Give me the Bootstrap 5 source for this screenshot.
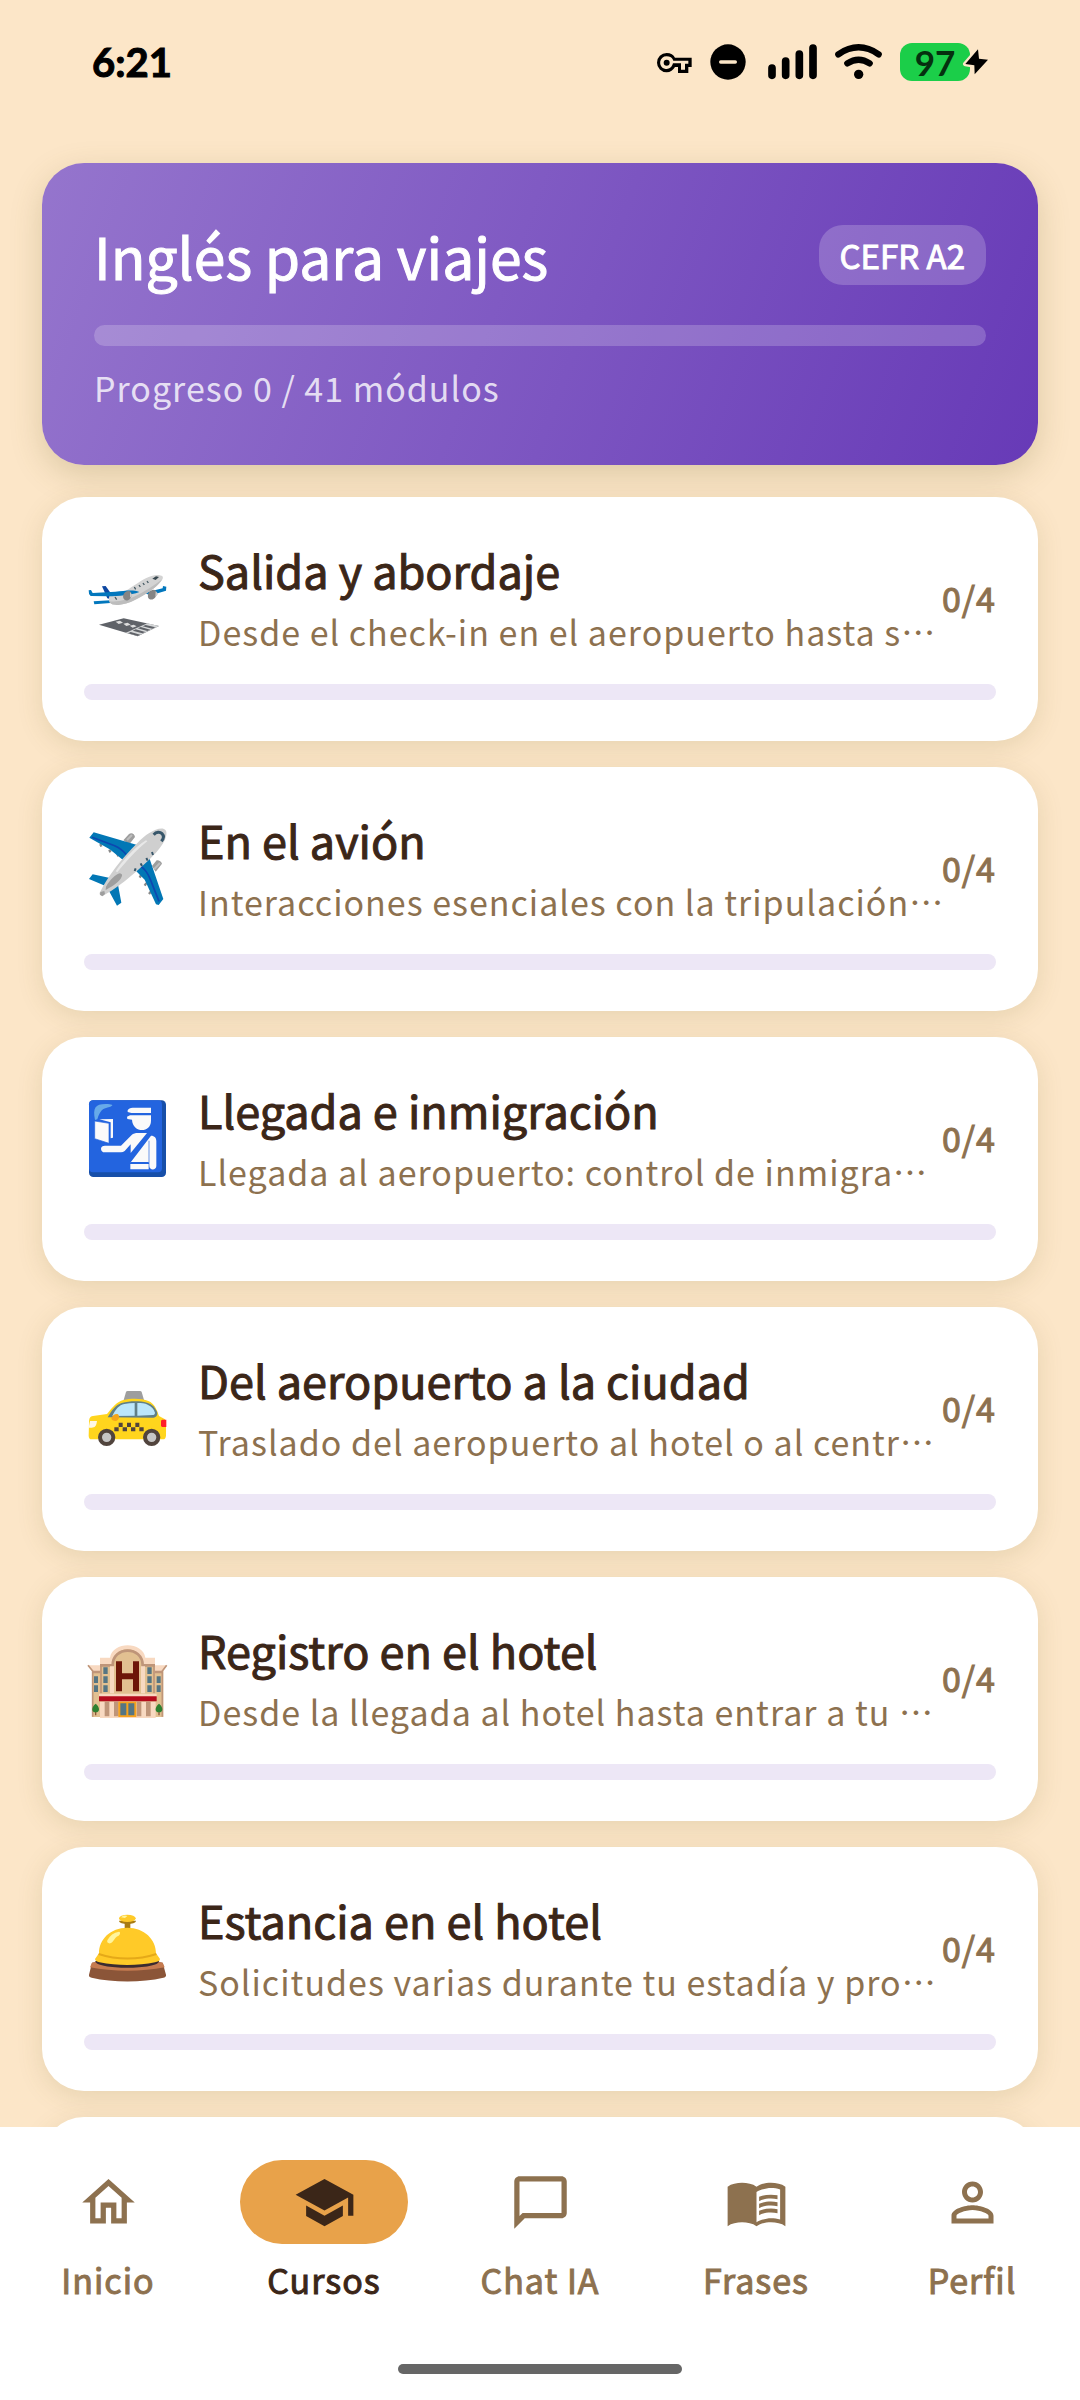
<!DOCTYPE html>
<html lang="es">
<head>
<meta charset="utf-8">
<meta name="viewport" content="width=device-width, initial-scale=1">
<title>Inglés para viajes</title>
<link rel="stylesheet" href="https://cdn.jsdelivr.net/npm/bootstrap@5.3.0/dist/css/bootstrap.min.css">
<style>
  :root { --sand: #fce6c8; --brown: #8d714f; --ink: #3b2618; }
  body { background: var(--sand); color: var(--brown); font-family: "Noto Sans CJK SC", "Noto Sans", sans-serif; font-size: 34px; line-height: 50px; }
  .status { padding: 43px 92px 82px; color: #000; font-family: Lato, "Open Sans", sans-serif; font-weight: 700; line-height: 38px; }
  .clock { font-size: 40px; -webkit-text-stroke: 1px; }
  .status-icons { gap: 18px; }
  .battery { width: 88px; height: 38px; }
  .battery-level { width: 70px; border-radius: 12px; background: #1bce49; color: #05300f; font-size: 35px; }
  .battery-bolt { left: 60px; top: 0; }
  .page { padding: 0 42px 26px; }
  .hero { padding: 52px; border-radius: 42px; margin-bottom: 32px; background: linear-gradient(110deg, #9575cd, #673ab7); box-shadow: 0 10px 32px rgba(110, 100, 40, .22); }
  .hero h1 { font-size: 57px; line-height: 80px; }
  .level { padding: 5px 21px; border-radius: 24px; background: rgba(255, 255, 255, .2); font-size: 33px; }
  .medium { font-weight: 400; -webkit-text-stroke: 1px; }
  .tracked, .hero p, .unit p { letter-spacing: 1px; }
  .hero .progress { height: 21px; margin: 30px 0 17px; border-radius: 11px; background: rgba(255, 255, 255, .2); }
  .hero p { color: rgba(255, 255, 255, .8); }
  .units { gap: 26px; }
  .unit { padding: 42px 42px 41px; min-height: 244px; border-radius: 42px; background: #fff; color: inherit; box-shadow: 0 6px 26px rgba(110, 100, 40, .15); }
  .unit h2 { font-size: 45px; line-height: 62px; margin-bottom: 6px; color: var(--ink); }
  .unit-text { min-width: 0; }
  .unit .progress { height: 16px; margin-top: 27px; border-radius: 8px; background: #ede7f6; }
  .emoji { width: 88px; height: 88px; margin-right: 26px; }
  .tabs { height: 273px; padding-top: 33px; background: #fff; }
  .tab { color: var(--brown); }
  .tab.active { color: var(--ink); }
  .pill { width: 168px; height: 84px; margin-bottom: 11px; }
  .tab.active .pill { background: #e8a24a; }
  .pill svg { width: 63px; height: 63px; fill: currentColor; }
  .home-bar { width: 284px; height: 10px; margin: 59px auto 0; background: #666; }
</style>
</head>
<body>
<header class="status d-flex justify-content-between align-items-center">
  <span class="clock">6:21</span>
  <div class="status-icons d-flex align-items-center">
    <svg width="35" height="38" viewBox="52 69 105 114"><path fill-rule="evenodd" d="M81 99c12 0 21 6 25 14h50v28h-10v18h-31v-18h-9c-5 9-14 16-25 16a29 29 0 0 1 0-58zm0 10a19 19 0 1 0 17 26l2-5h24v19h12v-18h10v-9H101l-2-4c-3-5-9-9-18-9zm0 10a9 9 0 1 1 0 18 9 9 0 0 1 0-18z"/></svg>
    <svg width="36" height="38" viewBox="210 69 108 114"><circle cx="264" cy="126" r="53"/><path d="M242 126h44" stroke="#fce6c8" stroke-width="10" stroke-linecap="round"/></svg>
    <svg width="53" height="38" viewBox="372 69 159 114"><path stroke="#000" stroke-width="23" stroke-linecap="round" d="M396 144v22M437 123v43M478 102v64M519 84v82"/></svg>
    <svg width="47" height="38" viewBox="585 69 141 114"><path fill="none" stroke="#000" stroke-width="19" stroke-linecap="round" d="M595 103q61-42 121 0M622 130q34-22 67 0"/><circle cx="656" cy="163" r="14"/></svg>
    <div class="battery position-relative d-flex">
      <span class="battery-level text-center">97</span>
      <svg class="battery-bolt position-absolute" width="28" height="38" viewBox="960 69 84 114"><path d="M1014 88l-38 44 27 4 1 27 40-44-27-3z" stroke="#fce6c8" stroke-width="14" stroke-linejoin="round"/><path d="M1014 88l-38 44 27 4 1 27 40-44-27-3z"/></svg>
    </div>
  </div>
</header>

<main class="page">
  <section class="hero text-white">
    <div class="d-flex justify-content-between align-items-center">
      <h1 class="medium mb-0">Inglés para viajes</h1>
      <span class="level medium">CEFR A2</span>
    </div>
    <div class="progress" role="progressbar" aria-label="Progreso del curso" aria-valuenow="0" aria-valuemin="0" aria-valuemax="41"><div class="progress-bar" style="width:0%"></div></div>
    <p class="mb-0">Progreso 0 / 41 módulos</p>
  </section>

  <div class="units d-flex flex-column">
    <a class="unit d-block text-decoration-none" href="#salida">
      <div class="d-flex align-items-center">
        <svg class="emoji flex-shrink-0" viewBox="42 39 264 264" aria-hidden="true">
          <path d="M87 251l74-19 106 23-64 31z" fill="#5f6268"/><path d="M166 276l66-29 35 8-64 30z" fill="#d5d7d8"/><path d="M174 277l29 8 8-4-29-8zM188 269l29 8 9-4-29-8zM203 262l29 8 9-4-29-8zM218 256l29 7 9-4-29-7z" fill="#5f6268"/><path d="M137 242l13-3 9 6-13 4zM160 248l13-3 9 6-13 4zM179 254l12-3 9 5-12 4z" fill="#ddd"/>
          <path d="M96 136l11-1 17 24-4 15-8-2z" fill="#0d47a1"/><path d="M71 181l50-3v8l-48 4z" fill="#0277bd"/><path d="M220 156l58-14 1-7 10 2-1 12-45 14z" fill="#0277bd"/>
          <path d="M118 165c31-2 53-17 75-32 24-16 47-32 72-31 10 1 16 4 13 11-8 18-40 39-67 54-24 14-48 26-78 24-12-1-19-8-15-26z" fill="#d3d3d3"/><path d="M118 181c50 6 100-23 159-66-19 28-50 46-82 62-25 13-72 24-77 4z" fill="#bdbdbd"/>
          <path d="M56 148l7-1 5 9 68-4c28-2 52-7 72 1-27 10-61 12-94 13l-52-1q-7-6-6-17z" fill="#0277bd"/><path d="M247 113l11-7 9 2-10 9z" fill="#37474f"/><path d="M135 168l5 8M193 138l4 7M207 132l4 6M219 126l4 6M231 120l4 6" stroke="#455a64" stroke-width="4"/><ellipse cx="172" cy="164" rx="12" ry="15" transform="rotate(30 172 164)" fill="#858585"/><ellipse cx="247" cy="161" rx="12" ry="16" transform="rotate(35 247 161)" fill="#858585"/><path d="M180 154l7 8-7 8zM257 151l8 7-9 10z" fill="#ccc"/>
        </svg>
        <div class="unit-text flex-fill text-nowrap"><h2 class="medium">Salida y abordaje</h2><p class="mb-0">Desde el check-in en el aeropuerto hasta s<span lang="zh-CN">&#x22EF;</span></p></div>
        <span class="medium tracked">0/4</span>
      </div>
      <div class="progress" role="progressbar" aria-label="Salida y abordaje" aria-valuenow="0" aria-valuemin="0" aria-valuemax="4"></div>
    </a>
    <a class="unit d-block text-decoration-none" href="#avion">
      <div class="d-flex align-items-center">
        <svg class="emoji flex-shrink-0" viewBox="42 70 264 264" aria-hidden="true">
          <path d="M160 119l17-19c8-5 17 0 18 9l-17 22zM246 196l14-17c7-1 14 4 16 10l-19 24z" fill="#9e9e9e"/><path d="M171 118l15-15M253 205l17-18" stroke="#bdbdbd" stroke-width="6"/><path d="M91 130l3 8M118 147l3 8M142 159l3 8M209 231l5-9M224 255l5-8M237 280l6-8" stroke="#888" stroke-width="7"/>
          <path d="M71 95l128 37-40 46-40-32-61-35zM196 209l41-40 43 126-14 18-8-2-34-74zM68 221l52 11-15 23-48-20zM117 271l27-19 10 54-13 9z" fill="#0277b5"/><path d="M66 110l68 25q22 10 35 27M210 195q20 14 30 39l27 68" fill="none" stroke="#0d47b1" stroke-width="5"/>
          <path d="M92 271c22-45 62-97 111-145 22-22 52-45 77-42 14 3 10 23 3 37-16 31-48 59-79 87-35 31-72 60-105 77-11 0-13-6-7-14z" fill="#cfcfcf"/><path d="M137 212c19-31 58-73 91-93l4 3c-32 25-63 60-90 93z" fill="#e8e8e8"/><path d="M108 258c12-21 29-37 42-40 8 3 8 7 2 16-13 17-31 25-45 34zM91 274l12-3 2 9-8 7-7-5z" fill="#9e9e9e"/><path d="M251 102c8-9 19-9 25-3 6 6 5 15-2 23" fill="none" stroke="#37566a" stroke-width="9"/><path d="M197 203l-3 8M212 188l4 8M229 172l4 8M246 154l3 9" stroke="#37566a" stroke-width="6"/>
        </svg>
        <div class="unit-text flex-fill text-nowrap"><h2 class="medium">En el avión</h2><p class="mb-0">Interacciones esenciales con la tripulación<span lang="zh-CN">&#x22EF;</span></p></div>
        <span class="medium tracked">0/4</span>
      </div>
      <div class="progress" role="progressbar" aria-label="En el avión" aria-valuenow="0" aria-valuemin="0" aria-valuemax="4"></div>
    </a>
    <a class="unit d-block text-decoration-none" href="#llegada">
      <div class="d-flex align-items-center">
        <svg class="emoji flex-shrink-0" viewBox="42 71 264 264" aria-hidden="true">
          <rect x="57" y="90" width="231" height="230" rx="13" fill="#174fa9"/><rect x="57" y="90" width="219" height="216" rx="12" fill="#2364df"/><path d="M75 149c-7-36 0-48 32-48 18 0 27 3 14 8-24 5-31 11-39 38z" fill="#67aae9"/>
          <g fill="#fafafa"><path d="M88 147l41-1v56l-7 2v-48z"/><path d="M74 152l43 7v60l-43-14z" stroke="#2364df" stroke-width="2"/><path d="M173 120q4-8 15-8h55v17h-56l-14-4zM171 139l9-4h63v16c0 38-55 38-57-3l-14-2zM93 235c0-6 5-9 12-9h48l32-32c5-4 11-6 19-6h27l-49 60v-26l-18 20q-5 4-11 4h-49c-7 0-11-5-11-11zM243 196c11 0 16 7 16 16v75c0 13-21 14-21 0v-76h-2v66h-55zM181 281h55v16h-55z"/></g><path d="M174 130h69M181 277h55" stroke="#2364df" stroke-width="4"/>
        </svg>
        <div class="unit-text flex-fill text-nowrap"><h2 class="medium">Llegada e inmigración</h2><p class="mb-0">Llegada al aeropuerto: control de inmigra<span lang="zh-CN">&#x22EF;</span></p></div>
        <span class="medium tracked">0/4</span>
      </div>
      <div class="progress" role="progressbar" aria-label="Llegada e inmigración" aria-valuenow="0" aria-valuemin="0" aria-valuemax="4"></div>
    </a>
    <a class="unit d-block text-decoration-none" href="#ciudad">
      <div class="d-flex align-items-center">
        <svg class="emoji flex-shrink-0" viewBox="42 13 264 264" aria-hidden="true">
          <path d="M168 97q1-3 5-3h37q4 0 5 3l7 24h-61z" fill="#9e9e9e"/><path d="M57 192c0-13 1-22 12-23l42-6c17-21 30-37 49-42 25-6 56-5 75 3 18 8 25 24 32 45l18 10c3 11 4 26 3 49q-1 11-9 11H65q-9 0-9-11z" fill="#ffd51d"/><path d="M113 173c13-22 24-37 42-43 26-7 53-7 76-1 17 5 23 14 30 27 3 9-2 17-11 18z" fill="#607f87"/><path d="M127 169c10-21 20-33 36-36 10-2 21-3 31-3v38zM202 130c12 0 23 1 31 5 12 5 18 12 22 24 0 4-3 7-7 7l-46 2z" fill="#bce6fa"/><path d="M124 176c2-8 13-16 20-12 7 7 2 19-7 20-7 0-13-2-13-8z" fill="#f4a51c"/><path d="M60 184h21c-2 16-7 20-16 20h-9z" fill="#fff8e7"/><path d="M289 180h-12q-4 0-4 5v12q0 5 4 5h12z" fill="#ff1e28"/><path d="M146 189h12v13h-12zM171 189h12v13h-12zM196 189h12v13h-12zM133 203h13v12h-13zM158 203h13v12h-13zM183 203h13v12h-13zM208 203h13v12h-13z" fill="#51443d"/><g fill="#c6c6c6" stroke="#51443d" stroke-width="12"><circle cx="110" cy="233" r="20"/><circle cx="245" cy="233" r="20"/></g>
        </svg>
        <div class="unit-text flex-fill text-nowrap"><h2 class="medium">Del aeropuerto a la ciudad</h2><p class="mb-0">Traslado del aeropuerto al hotel o al centr<span lang="zh-CN">&#x22EF;</span></p></div>
        <span class="medium tracked">0/4</span>
      </div>
      <div class="progress" role="progressbar" aria-label="Del aeropuerto a la ciudad" aria-valuenow="0" aria-valuemin="0" aria-valuemax="4"></div>
    </a>
    <a class="unit d-block text-decoration-none" href="#registro">
      <div class="d-flex align-items-center">
        <svg class="emoji flex-shrink-0" viewBox="42 44 264 264" aria-hidden="true">
          <path d="M66 155h214v138H66z" fill="#e2c091"/><path d="M90 132h165v160H90z" fill="#e2c091"/><path d="M54 138h36v19H68zM255 138h35l-12 19h-23z" fill="#f8d9c1"/><path d="M54 138l14 17v137M290 138l-13 17v137" fill="none" stroke="#bf9579" stroke-width="5"/><path d="M68 158h23M254 158h23" stroke="#bf9579" stroke-width="7"/>
          <path d="M90 115h30c7-50 99-50 106 0h29v22H90z" fill="#f8d9c1"/><path d="M126 222v-84c0-64 92-64 92 0v84z" fill="#e2c091"/><path d="M90 138h38c0-59 90-59 90 0h37" fill="none" stroke="#bf9579" stroke-width="8"/><path d="M126 141v81M219 141v81" stroke="#f8d9c1" stroke-width="12"/><path d="M93 140v82M252 140v82" stroke="#bf9579" stroke-width="5"/>
          <path d="M138 126h18v36h33v-36h18v90h-18v-36h-33v36h-18z" fill="#6d1608"/><path d="M100 144h13v20h-13zM100 171h13v20h-13zM100 198h13v20h-13zM232 144h13v20h-13zM232 171h13v20h-13zM232 198h13v20h-13zM72 171h12v20H72zM72 198h12v20H72zM260 171h12v20h-12zM260 198h12v20h-12z" fill="#557583"/>
          <path d="M87 223h173v10H87zM90 247h167v49H90z" fill="#f8d9c1"/><path d="M104 247h14v44h-14zM132 247h14v44h-14zM200 247h14v44h-14zM228 247h14v44h-14z" fill="#bf9579"/><path d="M87 231h173v15H87z" fill="#b40b1c"/><path d="M145 247h54v46h-54z" fill="#f7a21d"/><path d="M151 252h18v36h-18zM175 252h18v36h-18z" fill="#557583"/><path d="M77 271v17M267 271v17" stroke="#8b5638" stroke-width="4"/><path d="M77 253c13 10 14 26 0 26s-13-16 0-26zM267 253c13 10 14 26 0 26s-13-16 0-26z" fill="#2e8131"/>
        </svg>
        <div class="unit-text flex-fill text-nowrap"><h2 class="medium">Registro en el hotel</h2><p class="mb-0">Desde la llegada al hotel hasta entrar a tu <span lang="zh-CN">&#x22EF;</span></p></div>
        <span class="medium tracked">0/4</span>
      </div>
      <div class="progress" role="progressbar" aria-label="Registro en el hotel" aria-valuenow="0" aria-valuemin="0" aria-valuemax="4"></div>
    </a>
    <a class="unit d-block text-decoration-none" href="#estancia">
      <div class="d-flex align-items-center">
        <svg class="emoji flex-shrink-0" viewBox="42 45 264 264" aria-hidden="true">
          <path d="M66 221c70-15 142-15 212 0l10 36c1 5-3 8-8 9-65 15-150 15-215 0-6-1-9-5-8-9z" fill="#8b5538"/><path d="M66 221c70-13 142-13 212 0l6 14c-67 14-157 14-224 0z" fill="#c67b50"/><path d="M76 216h191c3 27-194 27-191 0z" fill="#3b2b30"/><path d="M164 96h17v26h-17z" fill="#a87b13"/><path d="M87 193c0-42 34-77 85-77s86 35 86 77l12 17c-1 7-7 8-15 10-51 11-114 11-166 0-8-2-14-5-14-10z" fill="#ffca28"/><path d="M87 192c53 18 118 18 171 0l2 6c-54 18-121 18-175 0z" fill="#e5a918"/><path d="M147 95h51c0 13-51 13-51 0z" fill="#a87b13"/><ellipse cx="172" cy="88" rx="25" ry="11" fill="#ffca28"/><path d="M153 85q7-8 19-4l-7 6zM112 154q11-22 35-26c6 2 3 10-3 13-12 6-13 19-23 22-7 1-11-3-9-9z" fill="#fff59d"/>
        </svg>
        <div class="unit-text flex-fill text-nowrap"><h2 class="medium">Estancia en el hotel</h2><p class="mb-0">Solicitudes varias durante tu estadía y pro<span lang="zh-CN">&#x22EF;</span></p></div>
        <span class="medium tracked">0/4</span>
      </div>
      <div class="progress" role="progressbar" aria-label="Estancia en el hotel" aria-valuenow="0" aria-valuemin="0" aria-valuemax="4"></div>
    </a>
    <div class="unit"></div>
  </div>
</main>

<nav class="tabs fixed-bottom" aria-label="Principal">
  <div class="row g-0 text-center">
    <a class="tab col medium tracked text-decoration-none d-flex flex-column align-items-center" href="#inicio">
      <span class="pill rounded-pill d-flex align-items-center justify-content-center"><svg viewBox="0 0 24 24"><path d="M12 5.69l5 4.5V18h-2v-6H9v6H7v-7.81l5-4.5M12 3L2 12h3v8h6v-6h2v6h6v-8h3L12 3z"/></svg></span>Inicio</a>
    <a class="tab active col medium tracked text-decoration-none d-flex flex-column align-items-center" href="#cursos" aria-current="page">
      <span class="pill rounded-pill d-flex align-items-center justify-content-center"><svg viewBox="0 0 24 24"><path d="M5 13.18v4L12 21l7-3.82v-4L12 17l-7-3.82zM12 3L1 9l11 6 9-4.91V17h2V9L12 3z"/></svg></span>Cursos</a>
    <a class="tab col medium tracked text-decoration-none d-flex flex-column align-items-center" href="#chat">
      <span class="pill rounded-pill d-flex align-items-center justify-content-center"><svg viewBox="0 0 24 24"><path d="M4 4h16v12H5.17L4 17.17V4m0-2c-1.1 0-1.99.9-1.99 2L2 22l4-4h14c1.1 0 2-.9 2-2V4c0-1.1-.9-2-2-2H4z"/></svg></span>Chat IA</a>
    <a class="tab col medium tracked text-decoration-none d-flex flex-column align-items-center" href="#frases">
      <span class="pill rounded-pill d-flex align-items-center justify-content-center"><svg viewBox="0 0 24 24"><path fill-rule="evenodd" d="M12 6c-1.45-1.1-3.55-1.5-5.5-1.5S2.45 4.9 1 6v15c1.45-1.1 3.55-1.5 5.5-1.5s4.05.4 5.5 1.5c1.45-1.1 3.55-1.5 5.5-1.5s4.05.4 5.5 1.5V6c-1.45-1.1-3.55-1.5-5.5-1.5S13.45 4.9 12 6zM21 18.5c-1.1-.35-2.3-.5-3.5-.5-1.7 0-4.15.65-5.5 1.5V8c1.35-.85 3.8-1.5 5.5-1.5 1.2 0 2.4.15 3.5.5v11.5z"/><path d="M17.5 10.5c.88 0 1.73.09 2.5.26V9.24c-.79-.15-1.64-.24-2.5-.24-1.7 0-3.24.29-4.5.83v1.66c1.13-.64 2.7-.99 4.5-.99zM13 12.49v1.66c1.13-.64 2.7-.99 4.5-.99.88 0 1.73.09 2.5.26V11.9c-.79-.15-1.64-.24-2.5-.24-1.7 0-3.24.3-4.5.83zM17.5 14.33c-1.7 0-3.24.29-4.5.83v1.66c1.13-.64 2.7-.99 4.5-.99.88 0 1.73.09 2.5.26v-1.52c-.79-.16-1.64-.24-2.5-.24z"/></svg></span>Frases</a>
    <a class="tab col medium tracked text-decoration-none d-flex flex-column align-items-center" href="#perfil">
      <span class="pill rounded-pill d-flex align-items-center justify-content-center"><svg viewBox="0 0 24 24"><path d="M12 5.9c1.16 0 2.1.94 2.1 2.1s-.94 2.1-2.1 2.1S9.9 9.16 9.9 8s.94-2.1 2.1-2.1m0 9c2.97 0 6.1 1.46 6.1 2.1v1.1H5.9V17c0-.64 3.13-2.1 6.1-2.1M12 4C9.79 4 8 5.79 8 8s1.79 4 4 4 4-1.79 4-4-1.79-4-4-4zm0 9c-2.67 0-8 1.34-8 4v3h16v-3c0-2.66-5.33-4-8-4z"/></svg></span>Perfil</a>
  </div>
  <div class="home-bar rounded-pill"></div>
</nav>
<script src="https://cdn.jsdelivr.net/npm/bootstrap@5.3.0/dist/js/bootstrap.bundle.min.js"></script>
</body>
</html>
